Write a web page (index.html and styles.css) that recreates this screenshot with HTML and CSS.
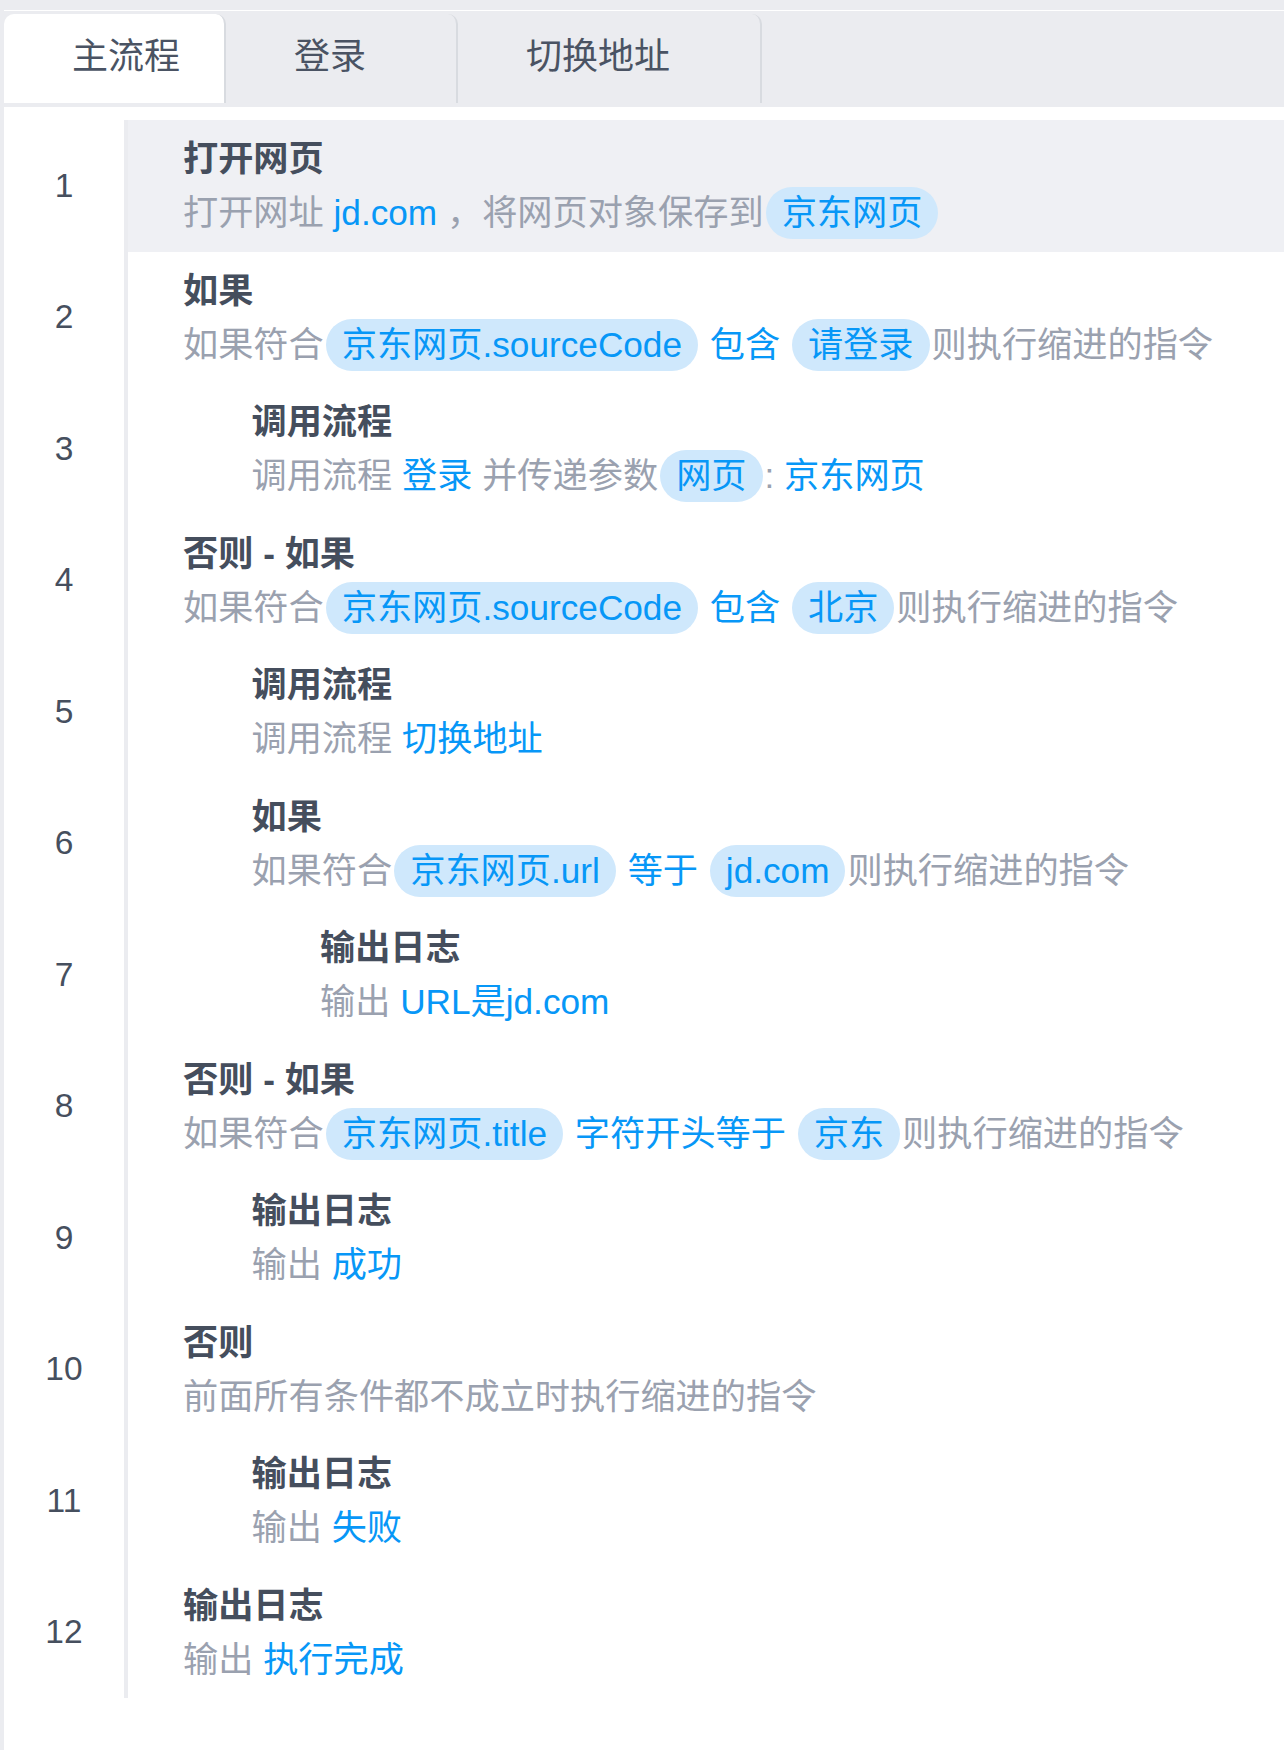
FILE: index.html
```html
<!DOCTYPE html>
<html lang="zh-CN">
<head>
  <meta charset="UTF-8" />
  <meta name="viewport" content="width=device-width, initial-scale=1.0" />
  <title>主流程</title>
  <link rel="stylesheet" href="styles.css">
</head>
<body>
  <div class="panel">
    <div class="tabs">
      <div class="tab active">主流程</div>
      <div class="tab closable">登录</div>
      <div class="tab closable">切换地址</div>
    </div>

    <div class="flow">
      <div class="row current">
        <div class="num">1</div>
        <div class="step">
          <div class="title">打开网页</div>
          <div class="desc">打开网址 <span class="val">jd.com</span> ，将网页对象保存到<span class="pill">京东网页</span></div>
        </div>
      </div>

      <div class="row">
        <div class="num">2</div>
        <div class="step">
          <div class="title">如果</div>
          <div class="desc">如果符合<span class="pill">京东网页.sourceCode</span> <span class="val">包含</span> <span class="pill">请登录</span>则执行缩进的指令</div>
        </div>
      </div>

      <div class="row">
        <div class="num">3</div>
        <div class="step lv-1">
          <div class="title">调用流程</div>
          <div class="desc">调用流程 <span class="val">登录</span> 并传递参数<span class="pill">网页</span>: <span class="val">京东网页</span></div>
        </div>
      </div>

      <div class="row">
        <div class="num">4</div>
        <div class="step">
          <div class="title">否则 - 如果</div>
          <div class="desc">如果符合<span class="pill">京东网页.sourceCode</span> <span class="val">包含</span> <span class="pill">北京</span>则执行缩进的指令</div>
        </div>
      </div>

      <div class="row">
        <div class="num">5</div>
        <div class="step lv-1">
          <div class="title">调用流程</div>
          <div class="desc">调用流程 <span class="val">切换地址</span></div>
        </div>
      </div>

      <div class="row">
        <div class="num">6</div>
        <div class="step lv-1">
          <div class="title">如果</div>
          <div class="desc">如果符合<span class="pill">京东网页.url</span> <span class="val">等于</span> <span class="pill">jd.com</span>则执行缩进的指令</div>
        </div>
      </div>

      <div class="row">
        <div class="num">7</div>
        <div class="step lv-2">
          <div class="title">输出日志</div>
          <div class="desc">输出 <span class="val">URL是jd.com</span></div>
        </div>
      </div>

      <div class="row">
        <div class="num">8</div>
        <div class="step">
          <div class="title">否则 - 如果</div>
          <div class="desc">如果符合<span class="pill">京东网页.title</span> <span class="val">字符开头等于</span> <span class="pill">京东</span>则执行缩进的指令</div>
        </div>
      </div>

      <div class="row">
        <div class="num">9</div>
        <div class="step lv-1">
          <div class="title">输出日志</div>
          <div class="desc">输出 <span class="val">成功</span></div>
        </div>
      </div>

      <div class="row">
        <div class="num">10</div>
        <div class="step">
          <div class="title">否则</div>
          <div class="desc">前面所有条件都不成立时执行缩进的指令</div>
        </div>
      </div>

      <div class="row">
        <div class="num">11</div>
        <div class="step lv-1">
          <div class="title">输出日志</div>
          <div class="desc">输出 <span class="val">失败</span></div>
        </div>
      </div>

      <div class="row">
        <div class="num">12</div>
        <div class="step">
          <div class="title">输出日志</div>
          <div class="desc">输出 <span class="val">执行完成</span></div>
        </div>
      </div>
    </div>
  </div>
</body>
</html>
```

FILE: styles.css
```css
body {
  margin: 0;
  background: #ebecf0;
  font-family: "Liberation Sans", "Noto Sans CJK SC", sans-serif;
  font-size: 35.2px;
  color: #454e5d;
}

.panel {
  margin: 10px 0 0 4px;
  border-top: 1px solid #ffffff;
  background: #ffffff;
  min-height: 1739px;
}

/* 标签栏 */
.tabs {
  display: flex;
  background: #ebecf0;
  padding: 3px 0 4px;
}

.tab {
  height: 89px;
  line-height: 86px;
  padding: 0 44px 0 68px;
  border-right: 2px solid #d8dbe0;
  border-radius: 10px 10px 0 0;
  font-size: 36px;
  color: #4a5363;
  white-space: nowrap;
}

.tab.closable {
  padding-right: 90px;
}

.tab.active {
  background: #ffffff;
}

/* 流程列表 */
.flow {
  padding-top: 13px;
}

.row {
  display: grid;
  grid-template-columns: 120px 1fr;
}

.num {
  display: flex;
  align-items: center;
  justify-content: center;
  font-size: 33.5px;
  color: #464f5e;
}

.step {
  border-left: 4px solid #ebecf0;
  padding: 12px 0 11.5px 55px;
  white-space: nowrap;
}

.row.current .step {
  background: #eff0f4;
}

.step.lv-1 {
  padding-left: 123.5px;
}

.step.lv-2 {
  padding-left: 192px;
}

.title {
  font-weight: bold;
  line-height: 54px;
  color: #454e5d;
}

.desc {
  line-height: 54px;
  color: #9aa1af;
}

.val {
  color: #0797f7;
}

.pill {
  display: inline-block;
  vertical-align: top;
  margin: 1px 2px 0;
  padding: 0 16px;
  height: 52px;
  line-height: 52px;
  border-radius: 26px;
  background: #cfe8fc;
  color: #0797f7;
}
```
